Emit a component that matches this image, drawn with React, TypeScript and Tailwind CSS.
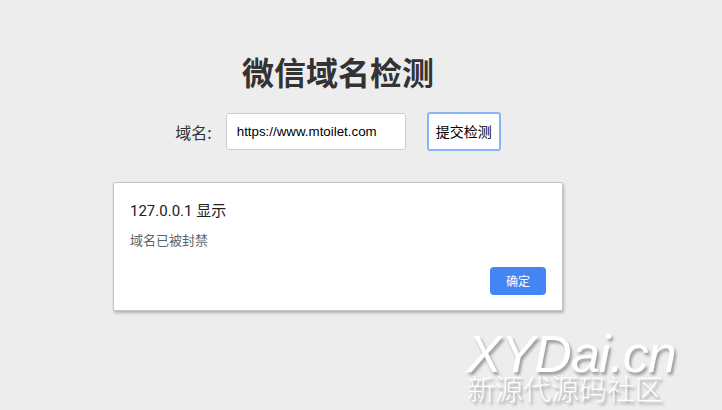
import React from "react";

export default function App() {
  return (
    <div
      className="relative w-full min-h-[410px] h-[410px] overflow-hidden bg-[#ededed]"
      style={{ fontFamily: "'Liberation Sans', 'Noto Sans CJK SC', sans-serif" }}
    >
      <div className="w-[676px] flex flex-col items-center pt-[50px]">
        <h1 className="text-[32px] leading-[42px] font-bold text-[#333333] font-['Noto_Sans_CJK_SC',sans-serif]">
          微信域名检测
        </h1>
        <div className="mt-[20px] flex items-center">
          <span className="text-[16px] leading-[20px] text-[#333333] font-['Noto_Sans_CJK_SC',sans-serif]">
            域名:
          </span>
          <input
            readOnly
            value="https://www.mtoilet.com"
            className="ml-[14px] w-[180px] h-[37px] border border-[#cccccc] rounded-[3px] bg-white pl-[10px] text-[13.33px] text-black font-['Liberation_Sans',sans-serif] outline-none"
          />
          <button className="ml-[21px] w-[74px] h-[39px] border-2 border-[#8ab4f8] rounded-[3px] bg-white text-[14px] text-black font-['Noto_Sans_CJK_SC',sans-serif]">
            提交检测
          </button>
        </div>
        <div className="mt-[31px] w-[450px] h-[129px] bg-white border border-[#c4c4c4] rounded-[2px] shadow-[1px_2px_3px_rgba(0,0,0,0.25)] flex flex-col px-[16px] pt-[17px] pb-[15px]">
          <div className="text-[15px] leading-[22px] text-[#202124] font-['Roboto','Noto_Sans_CJK_SC',sans-serif]">
            127.0.0.1 显示
          </div>
          <div className="mt-[9px] text-[13px] leading-[18px] text-[#5f6368] font-['Noto_Sans_CJK_SC',sans-serif]">
            域名已被封禁
          </div>
          <div className="mt-auto flex justify-end">
            <button className="w-[56px] h-[28px] rounded-[4px] bg-[#4285f4] text-white text-[12px] font-['Noto_Sans_CJK_SC',sans-serif]">
              确定
            </button>
          </div>
        </div>
      </div>
      <div className="absolute left-[467px] top-[334px] flex flex-col pointer-events-none select-none">
        <div className="text-[52px] leading-[40px] italic text-white tracking-[-1px] font-['Liberation_Sans',sans-serif] [text-shadow:2px_3px_3px_rgba(0,0,0,0.35)]">
          XYDai.cn
        </div>
        <div className="text-[28px] leading-[28px] text-white font-light font-['Noto_Sans_CJK_SC',sans-serif] [text-shadow:2px_3px_3px_rgba(0,0,0,0.35)]">
          新源代源码社区
        </div>
      </div>
    </div>
  );
}
